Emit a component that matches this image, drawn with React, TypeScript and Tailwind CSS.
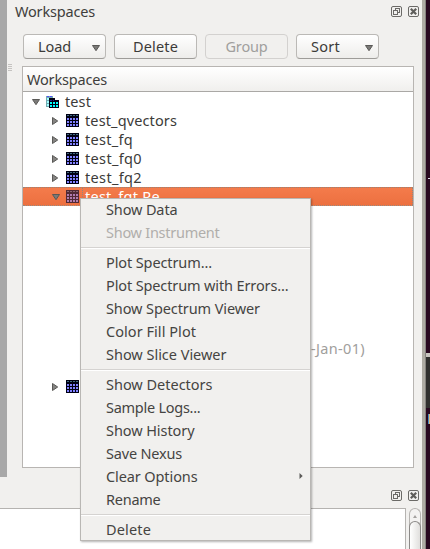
import { useLayoutEffect, useRef, useState } from 'react';

/** Label whose tracking is adjusted so it occupies the given width. */
function Label({ text, width, className = '' }: { text: string; width: number; className?: string }) {
  const ref = useRef<HTMLSpanElement>(null);
  const [spacing, setSpacing] = useState(0);
  useLayoutEffect(() => {
    if (ref.current) {
      const natural = ref.current.getBoundingClientRect().width;
      setSpacing((s) => s + (width - natural) / text.length);
    }
  }, [text, width]);
  return (
    <span ref={ref} className={`inline-block shrink-0 whitespace-pre ${className}`} style={{ letterSpacing: `${spacing}px` }}>
      {text}
    </span>
  );
}

function DockControls() {
  return (
    <div className="flex gap-[6px]">
      <svg width="11" height="11" viewBox="0 0 11 11" fill="none" stroke="#6b6a67" shapeRendering="crispEdges">
        <rect x=".5" y=".5" width="10" height="10" rx="1.5" shapeRendering="auto" />
        <path d="M4.5 4V2.5h4v4H7M2.5 4.5h4v4h-4z" />
      </svg>
      <svg width="11" height="11" viewBox="0 0 11 11" fill="none" stroke="#6b6a67">
        <rect x=".5" y=".5" width="10" height="10" rx="1.5" />
        <path d="M2.8 2.8l5.4 5.4M8.2 2.8l-5.4 5.4" stroke="#5f5e5b" strokeWidth="2.2" />
      </svg>
    </div>
  );
}

function DownArrow() {
  return (
    <svg width="8" height="6" viewBox="0 0 8 6">
      <path d="M.5.5h7L4 5.7z" fill="#7b7a78" stroke="#5a5957" strokeWidth="1" />
    </svg>
  );
}

function RightArrow() {
  return (
    <svg width="6" height="8" viewBox="0 0 6 8">
      <path d="M.5.5v7L5.7 4z" fill="#858482" stroke="#5a5957" strokeWidth="1" />
    </svg>
  );
}

function TableIcon({ selected = false }: { selected?: boolean }) {
  const cells = [0, 1, 2, 3];
  return (
    <svg width="13" height="13" viewBox="0 0 13 13" shapeRendering="crispEdges" className="shrink-0">
      <rect width="13" height="13" fill={selected ? '#512a35' : '#000014'} />
      {cells.map((r) => cells.map((c) => (
        <rect key={`${r}${c}`} x={1 + c * 3} y={r === 0 ? 1 : r * 3 + 1} width="2" height={r === 0 ? 1 : 2}
          fill={selected ? (r === 0 ? '#8b6673' : '#b07bae') : r === 0 ? '#416c80' : '#8080ff'} />
      )))}
    </svg>
  );
}

function GroupIcon() {
  return (
    <svg width="13" height="12" viewBox="0 0 13 12" shapeRendering="crispEdges">
      <path d="M0 0h7v3H4v8H0z" fill="#74a9b0" />
      <path d="M1 0h2v1H1zM4 0h2v1H4z" fill="#5050ff" />
      <path d="M1 2h2v2H1zM1 5h2v2H1zM1 8h2v2H1z" fill="#a0ffff" />
      <path d="M3 2h6v2h4v8H3z" fill="#000014" />
      <path d="M4 4h2v1H4zM7 4h1v1H7z" fill="#202080" />
      <path d="M4 6h2v2H4zM7 6h2v2H7zM10 6h2v2h-2zM4 9h2v2H4zM7 9h2v2H7zM10 9h2v2h-2z" fill="#00ffff" />
    </svg>
  );
}

function ToolButton({ text, width, menu = false, disabled = false }: { text: string; width: number; menu?: boolean; disabled?: boolean }) {
  return (
    <button disabled={disabled}
      className={`flex h-[25px] w-[83px] items-center rounded-[4px] border pb-px ${disabled ? 'border-[#d3d1cf] bg-[#f1f0ee] text-[#a09f9d]' : 'border-[#bbb9b6] border-b-[#9e9c99] bg-gradient-to-b from-white to-[#eeedeb] text-[#3c3b39]'} ${menu ? 'justify-between pr-[5px] pl-[14px]' : 'justify-center'}`}>
      <Label text={text} width={width} />
      {menu && <div className="pt-[3px]"><DownArrow /></div>}
    </button>
  );
}

const children = [
  { name: 'test_qvectors', width: 92 },
  { name: 'test_fq', width: 48 },
  { name: 'test_fq0', width: 57 },
  { name: 'test_fq2', width: 57 },
];

const menuGroups: { text: string; width: number; disabled?: boolean; sub?: boolean }[][] = [
  [{ text: 'Show Data', width: 71.5 }, { text: 'Show Instrument', width: 113.5, disabled: true }],
  [
    { text: 'Plot Spectrum...', width: 106 },
    { text: 'Plot Spectrum with Errors...', width: 182.5 },
    { text: 'Show Spectrum Viewer', width: 154 },
    { text: 'Color Fill Plot', width: 90 },
    { text: 'Show Slice Viewer', width: 120.5 },
  ],
  [
    { text: 'Show Detectors', width: 106.5 },
    { text: 'Sample Logs...', width: 94.5 },
    { text: 'Show History', width: 88.5 },
    { text: 'Save Nexus', width: 76 },
    { text: 'Clear Options', width: 91.5, sub: true },
    { text: 'Rename', width: 54.5 },
  ],
  [{ text: 'Delete', width: 45 }],
];

function ContextMenu() {
  return (
    <div className="absolute top-[198px] left-[80px] flex h-[343px] w-[231px] flex-col border border-[#b9b7b4] bg-[#f1f0ee] shadow-[1px_1px_2px_rgba(0,0,0,0.3)]">
      {menuGroups.map((group, i) => (
        <div key={i}>
          {i > 0 && <div className="h-[7px] pt-[2px]"><div className="h-[2px] w-full border-t border-[#d5d3d1] bg-white" /></div>}
          {group.map((item) => (
            <div key={item.text} className={`flex h-[23px] items-center justify-between pr-[7px] pb-[3px] pl-[25px] ${item.disabled ? 'text-[#b0aeab]' : 'text-[#454442]'}`}>
              <Label text={item.text} width={item.width} />
              {item.sub && <svg width="4" height="6" viewBox="0 0 4 6"><path d="M.5 0v6L3.7 3z" fill="#5b5a58" /></svg>}
            </div>
          ))}
        </div>
      ))}
    </div>
  );
}

function WorkspaceTree() {
  return (
    <div className="ml-[15px] h-[402px] w-[392px] border border-[#b8b5b2] bg-white">
      <div className="flex h-[25px] items-center border-b border-[#aaa8a5] bg-gradient-to-b from-white to-[#f0efed] pl-[4px]">
        <Label text="Workspaces" width={80} />
      </div>
      <div className="flex h-[19px] items-center pl-[9px] text-[#3c3b39]">
        <DownArrow />
        <div className="mr-[6px] ml-[6px]"><GroupIcon /></div>
        <Label text="test" width={26} />
      </div>
      {children.map((c) => (
        <div key={c.name} className="flex h-[19px] items-center pl-[29px] text-[#3c3b39]">
          <RightArrow />
          <div className="mr-[6px] ml-[8px]"><TableIcon /></div>
          <Label text={c.name} width={c.width} />
        </div>
      ))}
      <div className="flex h-[19px] items-center border-y border-dotted border-[#94877e] bg-gradient-to-b from-[#f47b4b] to-[#ec7040] pl-[29px] text-white">
        <DownArrow />
        <div className="ml-[6px]"><TableIcon selected /></div>
        <div className="ml-[3px] flex h-[17px] flex-1 items-center border-x border-dotted border-[#94877e] pl-[2px]">
          <Label text="test_fqt.Re" width={75} />
        </div>
      </div>
      <div className="flex h-[171px] flex-col items-end justify-end pr-[48px] pb-[19px]">
        <div className="flex h-[19px] items-center text-[#9f9e9c]"><Label text="-Jan-01)" width={54} /></div>
      </div>
      <div className="flex h-[19px] items-center gap-[8px] pl-[29px]">
        <RightArrow />
        <TableIcon />
      </div>
    </div>
  );
}

export default function App() {
  return (
    <div className="relative flex h-[549px] w-[430px] overflow-hidden bg-[#f1f0ee] font-['Noto_Sans','Open_Sans',sans-serif] text-[14.5px] leading-[19px] text-[#3f3e3c]">
      <div className="flex w-[422px] shrink-0 flex-col">
        <div className="flex h-[508px] shrink-0">
          <div className="h-[477px] w-[7px] shrink-0 bg-[#a8a8a8]" />
          <div className="flex w-[415px] flex-col">
            <div className="flex h-[34px] items-start justify-between pr-[3px] pl-[8px]">
              <div className="pt-[2px]"><Label text="Workspaces" width={80} /></div>
              <div className="pt-[6px]"><DockControls /></div>
            </div>
            <div className="flex h-[32px] gap-[8px] pl-[16px]">
              <ToolButton text="Load" width={33} menu />
              <ToolButton text="Delete" width={45} />
              <ToolButton text="Group" width={42} disabled />
              <ToolButton text="Sort" width={29} menu />
            </div>
            <div className="flex h-[403px]">
              <WorkspaceTree />
            </div>
            <div className="flex justify-end pt-[21px] pr-[3px]"><DockControls /></div>
          </div>
        </div>
        <div className="flex h-[41px]">
          <div className="w-[406px] border-t border-r border-[#b5b3b0] bg-white" />
          <div className="ml-[3px] flex w-[12px] flex-col items-center rounded-t-[6px] border border-b-0 border-[#b5b3b0] bg-[#f3f2f1]">
            <svg width="4" height="12" viewBox="0 0 4 12"><path d="M2 6L4 9H0z" fill="#a3a19f" /></svg>
            <div className="-mx-px w-[12px] flex-1 rounded-t-[6px] border border-b-0 border-[#8c8a88] bg-gradient-to-r from-white to-[#e0dfdd]" />
          </div>
        </div>
      </div>
      <div className="w-[4px] shrink-0 border-r border-[#85837e] bg-[#aeaca4]" />
      <div className="flex w-[4px] shrink-0 flex-col bg-[#28081f]">
        <div className="h-[176px]" />
        <div className="flex h-[3px] justify-end"><div className="mt-[2px] h-px w-[2px] bg-[#e2e2ed]" /></div>
        <div className="h-[174px]" />
        <div className="h-[4px] bg-[#c8c5c0]" />
        <div className="h-[51px] bg-[#30302e]" />
        <div className="h-[6px]" />
        <div className="flex h-[10px] justify-end"><div className="w-[2px] border-l border-[#4389c6] bg-[#e0b879]" /></div>
      </div>
      <div className="absolute top-[64px] left-[8px] flex flex-col gap-px">
        <div className="h-px w-[4px] bg-[#c5c3c1]" />
        <div className="h-px w-[4px] bg-[#c5c3c1]" />
        <div className="h-px w-[4px] bg-[#c5c3c1]" />
        <div className="h-px w-[4px] bg-[#c5c3c1]" />
      </div>
      <ContextMenu />
    </div>
  );
}
